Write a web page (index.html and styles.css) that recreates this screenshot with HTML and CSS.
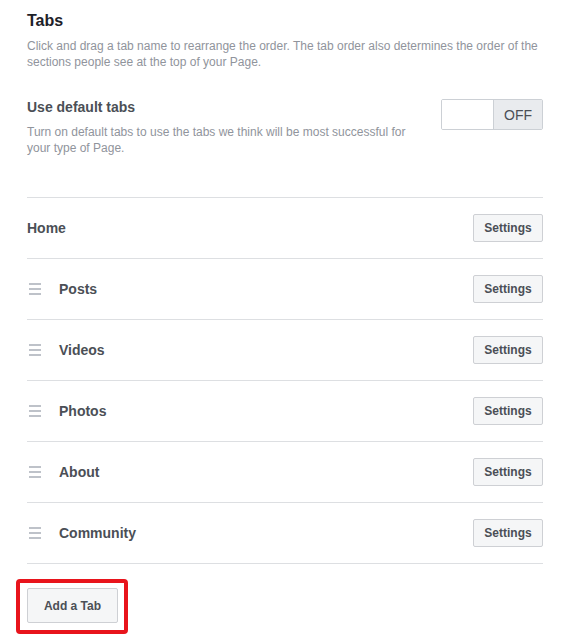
FILE: index.html
```html
<!DOCTYPE html>
<html>
<head>
<meta charset="utf-8">
<link rel="stylesheet" href="styles.css">
</head>
<body>
<div class="page">
  <h1 class="title">Tabs</h1>
  <p class="desc wide">Click and drag a tab name to rearrange the order. The tab order also determines the order of the sections people see at the top of your Page.</p>

  <div class="default">
    <div class="default-text">
      <div class="default-title">Use default tabs</div>
      <p class="desc narrow">Turn on default tabs to use the tabs we think will be most successful for your type of Page.</p>
    </div>
    <div class="toggle">
      <span class="toggle-on"></span>
      <span class="toggle-off">OFF</span>
    </div>
  </div>

  <ul class="tabs">
    <li class="tab">
      <span class="tab-name">Home</span>
      <button class="btn">Settings</button>
    </li>
    <li class="tab">
      <span class="tab-left"><svg class="grip" width="12" height="12" viewBox="0 0 12 12"><rect x="0" y="0" width="12" height="2"/><rect x="0" y="5" width="12" height="2"/><rect x="0" y="10" width="12" height="2"/></svg><span class="tab-name">Posts</span></span>
      <button class="btn">Settings</button>
    </li>
    <li class="tab">
      <span class="tab-left"><svg class="grip" width="12" height="12" viewBox="0 0 12 12"><rect x="0" y="0" width="12" height="2"/><rect x="0" y="5" width="12" height="2"/><rect x="0" y="10" width="12" height="2"/></svg><span class="tab-name">Videos</span></span>
      <button class="btn">Settings</button>
    </li>
    <li class="tab">
      <span class="tab-left"><svg class="grip" width="12" height="12" viewBox="0 0 12 12"><rect x="0" y="0" width="12" height="2"/><rect x="0" y="5" width="12" height="2"/><rect x="0" y="10" width="12" height="2"/></svg><span class="tab-name">Photos</span></span>
      <button class="btn">Settings</button>
    </li>
    <li class="tab">
      <span class="tab-left"><svg class="grip" width="12" height="12" viewBox="0 0 12 12"><rect x="0" y="0" width="12" height="2"/><rect x="0" y="5" width="12" height="2"/><rect x="0" y="10" width="12" height="2"/></svg><span class="tab-name">About</span></span>
      <button class="btn">Settings</button>
    </li>
    <li class="tab">
      <span class="tab-left"><svg class="grip" width="12" height="12" viewBox="0 0 12 12"><rect x="0" y="0" width="12" height="2"/><rect x="0" y="5" width="12" height="2"/><rect x="0" y="10" width="12" height="2"/></svg><span class="tab-name">Community</span></span>
      <button class="btn">Settings</button>
    </li>
  </ul>

  <div class="highlight">
    <button class="btn btn-add">Add a Tab</button>
  </div>
</div>
</body>
</html>
```

FILE: styles.css
```css
* { box-sizing: border-box; }
html, body { margin: 0; padding: 0; background: #fff; }
body {
  font-family: "Liberation Sans", Arial, Helvetica, sans-serif;
  color: #1d2129;
}
.page {
  width: 584px;
  padding: 11px 41px 0 27px;
}
.title {
  margin: 0;
  font-size: 16px;
  line-height: 20px;
  font-weight: bold;
  color: #1d2129;
}
.desc {
  margin: 0;
  font-size: 12px;
  line-height: 16px;
  color: #90949c;
}
.wide { margin-top: 7px; }
.default {
  display: flex;
  justify-content: space-between;
  align-items: flex-start;
  margin-top: 28px;
}
.default-text { width: 392px; }
.default-title {
  font-size: 14px;
  line-height: 18px;
  font-weight: bold;
  color: #4b4f56;
}
.narrow { margin-top: 8px; }
.toggle {
  display: flex;
  width: 102px;
  height: 31px;
  margin-top: 1px;
  border: 1px solid #ccd0d5;
  border-radius: 2px;
  overflow: hidden;
}
.toggle-on {
  width: 52px;
  background: #fff;
  border-right: 1px solid #ccd0d5;
}
.toggle-off {
  flex: 1;
  background: #e9ebee;
  display: flex;
  align-items: center;
  justify-content: center;
  font-size: 14px;
  color: #4b4f56;
}
.tabs {
  list-style: none;
  margin: 41px 0 0;
  padding: 0;
  border-bottom: 1px solid #dddfe2;
}
.tab {
  display: flex;
  align-items: center;
  justify-content: space-between;
  height: 61px;
  border-top: 1px solid #dddfe2;
}
.tab-left {
  display: flex;
  align-items: center;
}
.grip {
  fill: #bec2c9;
  margin-left: 2px;
  margin-right: 18px;
}
.tab-name {
  font-size: 14px;
  font-weight: bold;
  color: #4b4f56;
}
.btn {
  font-family: "Liberation Sans", Arial, Helvetica, sans-serif;
  font-size: 12px;
  font-weight: bold;
  color: #4b4f56;
  background: #f5f6f7;
  border: 1px solid #ced0d4;
  border-radius: 2px;
  height: 28px;
  width: 70px;
  padding: 0;
}
.highlight {
  display: inline-block;
  margin: 15px 0 0 -11px;
  padding: 5px 6px 7px 7px;
  border: 4px solid #e8141c;
  border-radius: 4px;
}
.btn-add {
  display: block;
  width: 91px;
  height: 35px;
}
```
